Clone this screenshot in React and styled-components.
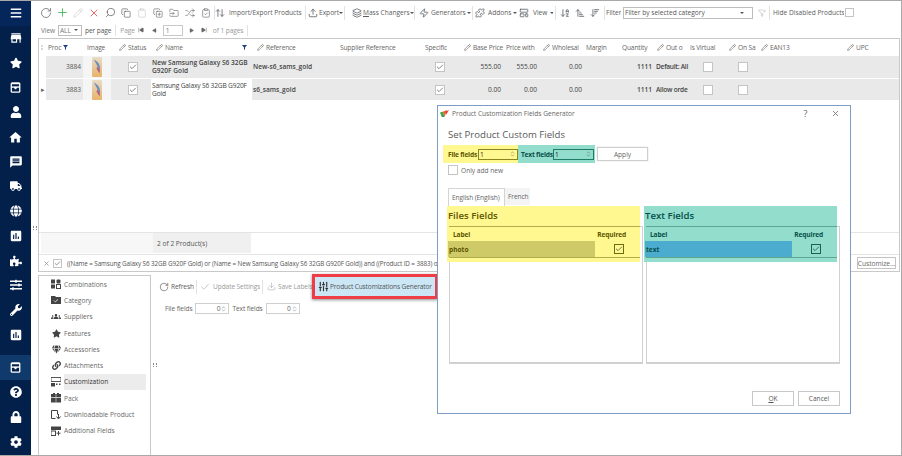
import React from 'react';
import styled, { createGlobalStyle } from 'styled-components';
import { Plus, Pencil, X, Search, Copy, Clipboard, CopyPlus, FolderInput, Shuffle, ClipboardCheck, ArrowUpDown, Upload, Layers, Zap, Puzzle, LayoutTemplate, ArrowDownAZ, ArrowUpNarrowWide, ArrowDownWideNarrow, FilterX, RotateCw, Check, Download, SkipBack, SkipForward, Play, ChevronUp, ChevronDown, SlidersVertical } from 'lucide-react';
import { FaStar, FaUser, FaTruck, FaGlobe, FaPuzzlePiece, FaSlidersH, FaWrench, FaQuestionCircle, FaLock, FaCog, FaGem, FaBars, FaLink } from 'react-icons/fa';
import { MdStore, MdHome, MdMessage, MdAssessment, MdGroups } from 'react-icons/md';

const Global = createGlobalStyle`
  html, body { margin: 0; padding: 0; width: 902px; height: 456px; overflow: hidden; background: #fff; }
  * { box-sizing: border-box; }
  body { font-family: "Open Sans", "Noto Sans", sans-serif; font-size: 6.6px; color: #5c5c5c; }
`;

const COLS = '7px 37px 28px 40px 101px 84px 83px 42px 45px 37px 43px 36px 34px 34px 36px 34px 84px 1fr';

const Page = styled.div`
  position: relative; width: 902px; height: 456px; display: flex;
  border: solid #a9a9a9; border-width: 1px 1px 1px 0; overflow: hidden; background: #fff;
`;
const Sidebar = styled.nav`
  width: 31px; flex: none; background: #03204a; display: flex; flex-direction: column; height: 456px; margin-top: -1px;
`;
const NavItem = styled.div`
  height: ${p => (p.$active ? 25 : p.$top ? 26 : 24.7)}px; flex: none; display: flex; align-items: center; justify-content: center; color: #fff; font-size: 12px;
  background: ${p => (p.$active ? '#113a6c' : p.$top ? '#04265a' : 'transparent')};
`;
const NavGap = styled.div`height: 8px; flex: none;`;
const Gutter = styled.div`
  width: 7px; flex: none; display: flex; justify-content: center; padding-top: 225px;
`;
const Dots = styled.span`
  width: 4px; height: 4px; border-left: 1px dotted #888; border-right: 1px dotted #888;
`;
const Main = styled.main`
  flex: 1; min-width: 0; display: flex; flex-direction: column;
`;
const Toolbar = styled.div`
  height: 23px; display: flex; align-items: center; white-space: nowrap;
`;
const IconCell = styled.span`
  width: ${p => p.$w || 16}px; flex: none; display: flex; justify-content: center; align-items: center; color: ${p => p.$c || '#5f6368'};
`;
const Sep = styled.span`
  width: 1px; height: ${p => p.$h || 14}px; background: #e2e2e2; margin: ${p => p.$m || '0'}; flex: none;
`;
const Tool = styled.span`
  display: inline-flex; align-items: center; gap: ${p => p.$gap ?? 3}px; color: ${p => p.$dim ? '#9a9a9a' : '#5c5c5c'}; flex: none; overflow: hidden;
  width: ${p => p.$w ? p.$w + 'px' : 'auto'}; margin-left: ${p => p.$ml || 0}px;
`;
const Caret = styled.span`
  width: 0; height: 0; border: 2px solid transparent; border-top: 2.5px solid #555; border-bottom: 0; margin-left: -1px; flex: none;
`;
const FilterSelect = styled.span`
  width: 130px; height: 12px; flex: none; border: 1px solid #bdbdbd; margin: 0 4px 0 2px; padding: 0 8px 0 1px; display: flex; align-items: center; justify-content: space-between; color: #555;
`;
const Square = styled.span`
  width: ${p => p.$s || 10}px; height: ${p => p.$s || 10}px; flex: none; border: 1px solid ${p => p.$b || '#c4c4c4'}; background: ${p => p.$bg || '#fff'};
  display: inline-flex; align-items: center; justify-content: center; color: ${p => p.$c || '#444'}; margin-left: ${p => p.$ml || 0}px;
`;
const Pager = styled.div`
  height: 14px; display: flex; align-items: center; padding-left: 3px; white-space: nowrap; color: #777; margin-top: -1px; margin-bottom: 1px; letter-spacing: -0.1px;
`;
const PagerSelect = styled.span`
  width: 24px; height: 11px; border: 1px solid #bdbdbd; margin: 0 3px; padding: 0 3px 0 1px; display: flex; align-items: center; justify-content: space-between;
`;
const PagerInput = styled.span`
  width: 20px; height: 11px; border: 1px solid #c8c8c8; margin: 0 2px; padding-left: 2px; line-height: 9px;
`;
const Muted = styled.span`
  color: ${p => p.$c || '#999'}; margin-left: ${p => p.$ml || 0}px;
`;
const Grid = styled.section`
  height: 234px; flex: none; border: 1px solid #c9c9c9; margin-right: 1px; display: flex; flex-direction: column;
`;
const HeaderRow = styled.div`
  display: grid; grid-template-columns: ${COLS}; height: 17px; align-items: center; white-space: nowrap; flex: none; letter-spacing: -0.15px;
`;
const HeaderCell = styled.span`
  display: flex; align-items: center; gap: 2px; overflow: hidden; padding-left: ${p => p.$pad ?? 2}px; color: #666;
`;
const NameFunnel = styled.span`
  margin-left: auto; margin-right: 5px; display: flex;
`;
const DataRow = styled.div`
  display: grid; grid-template-columns: ${COLS}; height: ${p => p.$h}px; align-items: stretch; flex: none; margin-bottom: 1px;
`;
const Cell = styled.span`
  background: ${p => p.$bg || '#e9e9e9'}; display: flex; align-items: center; overflow: hidden; white-space: ${p => p.$wrap ? 'normal' : 'nowrap'};
  justify-content: ${p => p.$align || 'flex-start'}; padding: 0 ${p => p.$pr ?? 2}px 0 ${p => p.$pl ?? 1}px; color: ${p => p.$c || '#444'}; font-weight: ${p => p.$w || 400}; line-height: 8px;
  letter-spacing: ${p => p.$ls || 0}px;
`;
const Spacer = styled.div`flex: 1;`;
const SummaryRow = styled.div`
  height: 21px; flex: none; border-top: 1px solid #e4e4e4; display: grid; grid-template-columns: 112px 98px; padding-left: 2px; margin-bottom: 1px;
`;
const SummaryCell = styled.span`
  background: ${p => p.$bg}; display: flex; align-items: center; padding-left: 4px; color: #555;
`;
const FilterRow = styled.div`
  height: 17px; flex: none; border-top: 1px solid #e4e4e4; display: flex; align-items: center; padding: 0 3px 0 4px; gap: 3px; white-space: nowrap; overflow: hidden; color: #555;
`;
const FilterText = styled.span`
  flex: 1; min-width: 0; overflow: hidden; font-size: 6.3px; letter-spacing: -0.1px; padding-left: 2px;
`;
const Customize = styled.span`
  width: 39px; height: 12px; border: 1px solid #c4c4c4; display: flex; align-items: center; justify-content: center; flex: none; color: #666;
`;
const Lower = styled.div`
  flex: 1; display: flex; margin-top: 3px; min-height: 0;
`;
const SideList = styled.ul`
  width: 113px; flex: none; list-style: none; margin: 0; border: 1px solid #c9c9c9; border-bottom: 0; padding: 0 4px 0 12px;
`;
const SideItem = styled.li`
  height: 16.3px; display: flex; align-items: center; gap: 3px; color: #666;
`;
const SideLabel = styled.span`
  flex: 1; height: 16px; display: flex; align-items: center; background: ${p => p.$active ? '#ececec' : 'transparent'}; color: ${p => p.$active ? '#333' : '#666'};
`;
const SideIcon = styled.span`
  width: 10px; height: 10px; flex: none; display: flex; align-items: center; justify-content: center; color: #444; font-size: 10px;
`;
const Gutter2 = styled.div`
  width: 7px; flex: none; display: flex; align-items: center; justify-content: center;
`;
const Detail = styled.div`
  flex: 1;
`;
const DetailBar = styled.div`
  height: 23px; display: flex; align-items: center; white-space: nowrap; letter-spacing: -0.1px;
`;
const GeneratorButton = styled.span`
  width: 126px; height: 25px; flex: none; border: 3px solid #ef3d47; box-shadow: 0 1px 3px rgba(0,0,0,.45); background: #cbe6f5;
  display: flex; align-items: center; gap: 1px; padding-left: 3px; color: #555; font-size: 6.6px; letter-spacing: -0.15px;
`;
const FieldRow = styled.div`
  display: flex; align-items: center; margin-top: 5px; padding-left: 7px; gap: 3px; color: #666; letter-spacing: -0.1px;
`;
const Spin = styled.span`
  width: 34px; height: 11px; border: 1px solid #cfcfcf; display: flex; align-items: center; justify-content: flex-end; gap: 1px; padding-right: 1px;
`;
const SpinArrows = styled.span`
  display: flex; flex-direction: column; width: 6px; color: #555;
  svg { margin: -1px 0; }
`;

const Dialog = styled.section`
  position: absolute; left: 437px; top: 104px; width: 414px; height: 309px; background: #fff; border: 1px solid #7f9dc4; padding: 0 10px 0 5px; display: flex; flex-direction: column; z-index: 5;
`;
const DialogTitle = styled.header`
  height: 15px; margin: 0 -9px 1px -3px; display: flex; align-items: center; gap: 3px; color: #666; flex: none;
`;
const TitleText = styled.span`flex: 1;`;
const TitleBtn = styled.span`
  width: 27px; color: #666; font-size: 9px; display: flex; justify-content: center;
`;
const Heading = styled.h2`
  margin: 6px 0 0 5px; font-size: 9.6px; font-weight: 400; color: #5a5a5a; line-height: 14px; flex: none;
`;
const FieldsBar = styled.div`
  display: flex; margin-top: 3px; height: 18px; align-items: center; flex: none; white-space: nowrap;
`;
const Hilite = styled.span`
  width: ${p => p.$w}px; height: 18px; background: ${p => p.$tone === 'teal' ? '#92ddcc' : '#fff78f'}; display: flex; align-items: center; gap: 2px; padding-left: ${p => p.$pl}px; font-weight: 700; color: ${p => p.$tone === 'teal' ? '#0a4f4a' : '#5b5600'}; flex: none;
`;
const HiliteLabel = styled.span`
  width: ${p => p.$w}px; flex: none; letter-spacing: -0.2px;
`;
const HiliteInput = styled.span`
  height: 11px; width: ${p => p.$w}px; flex: none; border: 1px solid ${p => p.$tone === 'teal' ? '#1f7a66' : '#8b8520'}; display: flex; align-items: center; justify-content: space-between; padding: 0 1px; font-weight: 400; color: #222;
`;
const ApplyBtn = styled.span`
  width: 51px; height: 14px; margin-left: 2px; border: 1px solid #cfcfcf; box-shadow: 0 0 1px #bbb; display: flex; align-items: center; justify-content: center; color: #666;
`;
const OnlyRow = styled.label`
  display: flex; align-items: center; gap: 3px; margin: 2px 0 0 5px; height: 10px; color: #666; flex: none;
`;
const Tabs = styled.div`
  display: flex; margin: 13px 0 0 5px; height: 18px; flex: none; white-space: nowrap;
`;
const Tab = styled.span`
  height: ${p => p.$on ? 18 : 17}px; padding: 0 3px; display: flex; align-items: center; color: #666; width: ${p => p.$wd}px; letter-spacing: -0.1px;
  border: ${p => p.$on ? '1px solid #d4d4d4' : '0'}; border-bottom: 0; background: ${p => p.$on ? '#fff' : '#f4f4f4'};
`;
const Panels = styled.div`
  display: flex; gap: 1px; margin-left: 4px; flex: none; height: 158px;
`;
const Panel = styled.div`
  position: relative; width: 196px;
  &::after {
    content: ''; position: absolute; left: 2px; right: 0; top: 20px; bottom: 0; border: 1px solid #d0d0d0; border-bottom-width: 2px; pointer-events: none;
  }
`;
const PanelBand = styled.div`
  width: 193px; height: 56px; background: ${p => p.$tone === 'teal' ? '#92ddcc' : '#fff78f'}; color: ${p => p.$tone === 'teal' ? '#07504a' : '#5b5600'}; position: relative; z-index: 1;
`;
const PanelTitle = styled.h3`
  margin: 0; height: 20px; font-size: 9.6px; font-weight: 600; line-height: 19px; padding-left: 1px;
`;
const TableHead = styled.div`
  height: 15px; margin-left: 2px; border-top: 1px solid ${p => p.$tone === 'teal' ? '#5fa593' : '#b3ad4e'}; display: flex; align-items: center; justify-content: space-between; font-weight: 700; padding: 0 14px 0 4px; letter-spacing: -0.15px;
`;
const TableRow = styled.div`
  height: 17px; margin-left: 2px; display: flex; align-items: stretch; border-bottom: 1px solid ${p => p.$tone === 'teal' ? '#5fa593' : '#b3ad4e'}; font-weight: 700;
`;
const RowLabel = styled.span`
  width: 147px; background: ${p => p.$tone === 'teal' ? '#4bacd0' : '#cfca68'}; display: flex; align-items: center; padding-left: 1px; margin-left: -1px;
`;
const RowCheck = styled.span`
  flex: 1; display: flex; align-items: center; justify-content: center; padding-left: 2px;
`;
const DialogFooter = styled.footer`
  display: flex; justify-content: flex-end; gap: 4px; margin-top: 27px; flex: none;
`;
const DlgBtn = styled.span`
  width: 42px; height: 15px; border: 1px solid #c8c8c8; display: flex; align-items: center; justify-content: center; color: #555;
`;
const Underline = styled.span`text-decoration: underline;`;
const Flip = styled.span`display: flex; transform: scaleX(-1);`;

const ArchiveIcon = ({ s = 13 }) => (
  <svg width={s} height={s} viewBox="0 0 16 16" fill="none"><rect x="2" y="1.5" width="12" height="13" rx="2" fill="#fff" /><rect x="3.6" y="4" width="8.8" height="2.6" fill="#03204a" /><path d="M3.6 8.4h2.6l1 1.6h1.6l1-1.6h2.6v4.4H3.6z" fill="#03204a" /></svg>
);
const Phone = ({ id }) => (
  <svg width="10" height="20" viewBox="0 0 10 20">
    <defs><linearGradient id={id} x1="0" y1="0" x2="0" y2="1"><stop offset="0" stopColor="#e9ddc9" /><stop offset=".5" stopColor="#e6c79a" /><stop offset="1" stopColor="#e8b468" /></linearGradient></defs>
    <rect width="10" height="20" rx="1" fill={`url(#${id})`} />
    <path d="M2 2.5 C7 5 8.5 9 8 13 L5.5 9.5 C4.5 7 3 5 2 2.5Z" fill="#6f8fbc" />
    <path d="M5.5 9.5 L8 13 L7.5 16.5 L4.5 11.5Z" fill="#b5607a" />
  </svg>
);
const PencilMini = () => <Pencil size={7} color="#666" />;
const MiniCheck = ({ s = 10, b, bg, c }) => (
  <Square $s={s} $b={b} $bg={bg} $c={c}><Check size={s - 2} strokeWidth={2} /></Square>
);
const Funnel = () => <svg width="5" height="5" viewBox="0 0 5 5"><path d="M0 0h5L3 2.6V5L2 4.2V2.6z" fill="#1d3f7a" /></svg>;
const I = ({ children }) => <svg width="10" height="10" viewBox="0 0 10 10" fill="#444">{children}</svg>;

const navIcons = [
  <MdStore size={14} />, <FaStar />, <ArchiveIcon />, <FaUser />, <MdHome size={15} />, <MdMessage size={14} />, <FaTruck />, <FaGlobe />,
  <MdAssessment size={14} />, <FaPuzzlePiece />, <FaSlidersH />, <FaWrench />, <MdAssessment size={14} />,
];
const lowerNav = [<FaQuestionCircle />, <FaLock />, <FaCog />];

const sideItems = [
  ['Combinations', <I><rect width="4" height="4" y=".5" /><rect x="5.5" y=".5" width="4" height="4" rx="1" /><rect y="5.5" width="4" height="4" /><rect x="5.5" y="5.5" width="4" height="4" fill="none" stroke="#444" /></I>],
  ['Category', <I><path d="M0 1h4l1 1h5v7H0z" /><path d="M3 5.5l1.4 1.4L7 4.4" stroke="#fff" fill="none" strokeWidth=".8" /></I>],
  ['Suppliers', <MdGroups size={11} />],
  ['Features', <FaStar size={9} />],
  ['Accessories', <FaGem size={9} />],
  ['Attachments', <FaLink size={9} />],
  ['Customization', <I><path d="M0 .5h10v4H0z" fill="none" stroke="#444" strokeWidth=".9" /><rect y="6" width="4" height="3.5" /><rect x="5" y="6.5" width="1.5" height="1.5" /><rect x="8" y="6.5" width="1.5" height="1.5" /></I>],
  ['Pack', <I><rect y="1" width="10" height="8.5" /><path d="M2 0h2v3H2zM6 0h2v3H6z" /><path d="M0 4.5h10" stroke="#fff" strokeWidth=".7" /><path d="M5 1v8.5" stroke="#fff" strokeWidth=".5" /></I>],
  ['Downloadable Product', <I><path d="M.5.5h6v4M.5.5v8h4" fill="none" stroke="#444" /><path d="M7.5 4v4M5.5 6.5l2 2.5 2-2.5" stroke="#444" fill="none" /></I>],
  ['Additional Fields', <I><rect y=".5" width="10" height="3.5" /><rect y="5" width="4.5" height="4.5" fill="none" stroke="#444" /><path d="M7.5 5v4.5M5.5 7.2h4" stroke="#444" /></I>],
];

const headers = [
  ['', 0, 2], ['Proc', 0, 2], ['Image', 0, 4], ['Status', 1, 8], ['Name', 1, 5], ['Reference', 1, 5], ['Supplier Reference', 0, 4], ['Specific', 0, 6], ['Base Price', 1, 3], ['Price with', 0, 0],
  ['Wholesal', 1, 0], ['Margin', 0, 0], ['Quantity', 0, 0], ['Out o', 1, 1], ['Is Virtual', 0, 0], ['On Sa', 1, 3], ['EAN13', 1, 1], ['UPC', 1, 3],
];

const rows = [
  { h: 22, id: '3884', name: 'New Samsung Galaxy S6 32GB G920F Gold', nameBg: '#e9e9e9', bold: 600, ls: 0, ref: 'New-s6_sams_gold', p1: '555.00', p2: '555.00', out: 'Default: All' },
  { h: 21, id: '3883', name: 'Samsung Galaxy S6 32GB G920F Gold', nameBg: '#fff', bold: 400, ls: -0.15, ref: 's6_sams_gold', p1: '0.00', p2: '0.00', out: 'Allow orde' },
];

const ToolIcons = [
  [RotateCw, '#666', 12], [Plus, '#2fb34a', 13], [Pencil, '#c9c9c9', 10], [X, '#e8343a', 12], [Search, '#555', 11, true], [Copy, '#555', 10], [Clipboard, '#c8c8c8', 10],
  [CopyPlus, '#666', 10], [FolderInput, '#666', 10], [Shuffle, '#666', 10], [ClipboardCheck, '#666', 10],
];

function Table({ tone, title, label }) {
  return (
    <Panel>
      <PanelBand $tone={tone}>
        <PanelTitle>{title}</PanelTitle>
        <TableHead $tone={tone}><span>Label</span><span>Required</span></TableHead>
        <TableRow $tone={tone}>
          <RowLabel $tone={tone}>{label}</RowLabel>
          <RowCheck><MiniCheck b={tone === 'teal' ? '#1f5f50' : '#6f6a10'} bg="transparent" c="#1d3b30" /></RowCheck>
        </TableRow>
      </PanelBand>
    </Panel>
  );
}
const Arrows = () => <SpinArrows><ChevronUp size={5} /><ChevronDown size={5} /></SpinArrows>;

export default function App() {
  return (
    <>
      <Global />
      <Page>
        <Sidebar>
          <NavItem $top><FaBars /></NavItem>
          {navIcons.map((ic, i) => <NavItem key={i}>{ic}</NavItem>)}
          <NavGap />
          <NavItem $active><ArchiveIcon /></NavItem>
          {lowerNav.map((ic, i) => <NavItem key={i}>{ic}</NavItem>)}
        </Sidebar>
        <Gutter><Dots /></Gutter>
        <Main>
          <Toolbar>
            {ToolIcons.map(([Ic, c, s, flip], i) => (
              <IconCell key={i} $c={c}>{flip ? <Flip><Ic size={s} strokeWidth={1.5} /></Flip> : <Ic size={s} strokeWidth={1.5} />}</IconCell>
            ))}
            <Sep />
            <Tool $gap={4} $w={90}><IconCell $w={10}><ArrowUpDown size={10} /></IconCell>Import/Export Products</Tool>
            <Sep />
            <Tool $ml={2} $gap={1} $w={36}><IconCell $w={10}><Upload size={10} /></IconCell>Export<Caret /></Tool>
            <Sep />
            <Tool $ml={6} $gap={1} $w={63}><IconCell $w={11}><Layers size={10} /></IconCell><span><Underline>M</Underline>ass Changers</span><Caret /></Tool>
            <Sep />
            <Tool $ml={4} $gap={2} $w={53}><IconCell $w={10}><Zap size={10} /></IconCell>Generators<Caret /></Tool>
            <Sep />
            <Tool $ml={1} $w={44}><IconCell $w={11}><Puzzle size={10} /></IconCell>Addons<Caret /></Tool>
            <Tool $ml={1} $gap={4} $w={34}><IconCell $w={10}><LayoutTemplate size={10} /></IconCell>View<Caret /></Tool>
            <Sep $m="0 1.5px 0 2px" />
            <IconCell $w={15}><ArrowDownAZ size={10} /></IconCell>
            <IconCell $w={15}><ArrowUpNarrowWide size={10} /></IconCell>
            <IconCell $w={15}><ArrowDownWideNarrow size={10} /></IconCell>
            <Sep $m="0 0 0 1.5px" />
            <Tool $ml={1} $w={15}>Filter</Tool>
            <FilterSelect>Filter by selected category<Caret /></FilterSelect>
            <IconCell $w={10} $c="#bbb"><FilterX size={8} /></IconCell>
            <Sep $m="0 0 0 2px" />
            <Tool $ml={3} $w={71}>Hide Disabled Products</Tool>
            <Square $s={9} $ml={1} />
          </Toolbar>
          <Pager>
            View<PagerSelect>ALL<Caret /></PagerSelect><Muted $c="#555">per page</Muted>
            <Sep $m="0 4px" $h={11} />
            <Muted>Page</Muted>
            <IconCell $w={13} $c="#666"><SkipBack size={6} fill="#666" /></IconCell>
            <IconCell $w={13} $c="#666"><Flip><Play size={5} fill="#666" /></Flip></IconCell>
            <PagerInput>1</PagerInput>
            <IconCell $w={13} $c="#666"><Play size={5} fill="#666" /></IconCell>
            <IconCell $w={13} $c="#666"><SkipForward size={6} fill="#666" /></IconCell>
            <Muted $ml={2}>of 1 pages</Muted>
            <Sep $m="0 4px" $h={11} />
          </Pager>
          <Grid>
            <HeaderRow>
              {headers.map(([t, pen, pad], i) => (
                <HeaderCell key={i} $pad={pad}>
                  {i === 0 && <Muted>⁞</Muted>}
                  {pen ? <PencilMini /> : null}{t}
                  {i === 1 && <Funnel />}
                  {i === 4 && <NameFunnel><Funnel /></NameFunnel>}
                </HeaderCell>
              ))}
            </HeaderRow>
            {rows.map((r, idx) => (
              <DataRow key={r.id} $h={r.h}>
                <Cell $bg="#fff" $align="center" $pl={0} $pr={0} $c="#666">{idx ? '▸' : ''}</Cell>
                <Cell $align="flex-end" $c="#555">{r.id}</Cell>
                <Cell $bg="#f5f5f5" $align="center" $pl={0} $pr={0}><Phone id={`ph${idx}`} /></Cell>
                <Cell $align="center" $pl={4} $pr={0}><MiniCheck /></Cell>
                <Cell $bg={r.nameBg} $wrap $w={r.bold} $ls={r.ls} $pr={0}>{r.name}</Cell>
                <Cell $w={600}>{r.ref}</Cell>
                <Cell />
                <Cell $align="center" $pr={1} $pl={0}><MiniCheck /></Cell>
                <Cell $align="flex-end" $pr={5}>{r.p1}</Cell>
                <Cell $align="flex-end" $pr={6}>{r.p2}</Cell>
                <Cell $align="flex-end" $pr={4}>0.00</Cell>
                <Cell />
                <Cell $align="flex-end" $w={600} $pr={4}>1111</Cell>
                <Cell $w={600} $pl={0} $pr={0} $ls={-0.25}>{r.out}</Cell>
                <Cell $align="center"><Square /></Cell>
                <Cell $align="center"><Square /></Cell>
                <Cell />
                <Cell />
              </DataRow>
            ))}
            <Spacer />
            <SummaryRow>
              <SummaryCell $bg="#f7f7f7" />
              <SummaryCell $bg="#f0f0f0">2 of 2 Product(s)</SummaryCell>
            </SummaryRow>
            <FilterRow>
              <X size={7} color="#777" />
              <MiniCheck s={9} />
              <FilterText>((Name = Samsung Galaxy S6 32GB G920F Gold) or (Name = New Samsung Galaxy S6 32GB G920F Gold)) and ((Product ID = 3883) or (Product ID = 3884))</FilterText>
              <Customize>Customize...</Customize>
            </FilterRow>
          </Grid>
          <Lower>
            <SideList>
              {sideItems.map(([t, ic]) => (
                <SideItem key={t}>
                  <SideIcon>{ic}</SideIcon>
                  <SideLabel $active={t === 'Customization'}>{t}</SideLabel>
                </SideItem>
              ))}
            </SideList>
            <Gutter2><Dots /></Gutter2>
            <Detail>
              <DetailBar>
                <IconCell $w={11} $c="#555"><RotateCw size={10} strokeWidth={1.5} /></IconCell>
                <Tool $ml={2} $w={23}>Refresh</Tool>
                <Sep $m="0 3px 0 2px" />
                <IconCell $w={10} $c="#bbb"><Check size={10} /></IconCell>
                <Tool $ml={3} $dim $w={47}>Update Settings</Tool>
                <Sep $m="0 3px 0 2px" />
                <IconCell $w={11} $c="#bbb"><Download size={9} /></IconCell>
                <Tool $ml={1} $dim $w={34}>Save Labels</Tool>
                <GeneratorButton><SlidersVertical size={11} strokeWidth={2.5} color="#333" />Product Customizations Generator</GeneratorButton>
              </DetailBar>
              <FieldRow>
                File fields
                <Spin>0<Arrows /></Spin>
                Text fields
                <Spin>0<Arrows /></Spin>
              </FieldRow>
            </Detail>
          </Lower>
        </Main>
        <Dialog>
          <DialogTitle>
            <svg width="9" height="9" viewBox="0 0 10 10"><path d="M0 4l2 5h3L3 3z" fill="#2fa84f" /><path d="M3 3l2 6 3-8z" fill="#e8632b" /><path d="M6 3l1 3 3-5z" fill="#e23b3b" /></svg>
            <TitleText>Product Customization Fields Generator</TitleText>
            <TitleBtn>?</TitleBtn>
            <TitleBtn><X size={9} /></TitleBtn>
          </DialogTitle>
          <Heading>Set Product Custom Fields</Heading>
          <FieldsBar>
            <Hilite $w={75} $pl={5}><HiliteLabel $w={28}>File fields</HiliteLabel><HiliteInput $w={40} $tone="yellow">1<Arrows /></HiliteInput></Hilite>
            <Hilite $w={77} $pl={3} $tone="teal"><HiliteLabel $w={30}>Text fields</HiliteLabel><HiliteInput $w={41} $tone="teal">1<Arrows /></HiliteInput></Hilite>
            <ApplyBtn>Apply</ApplyBtn>
          </FieldsBar>
          <OnlyRow><Square $s={10} />Only add new</OnlyRow>
          <Tabs><Tab $on $wd={57}>English (English)</Tab><Tab $wd={25}>French</Tab></Tabs>
          <Panels>
            <Table tone="yellow" title="Files Fields" label="photo" />
            <Table tone="teal" title="Text Fields" label="text" />
          </Panels>
          <DialogFooter>
            <DlgBtn><Underline>O</Underline>K</DlgBtn>
            <DlgBtn>Cancel</DlgBtn>
          </DialogFooter>
        </Dialog>
      </Page>
    </>
  );
}
